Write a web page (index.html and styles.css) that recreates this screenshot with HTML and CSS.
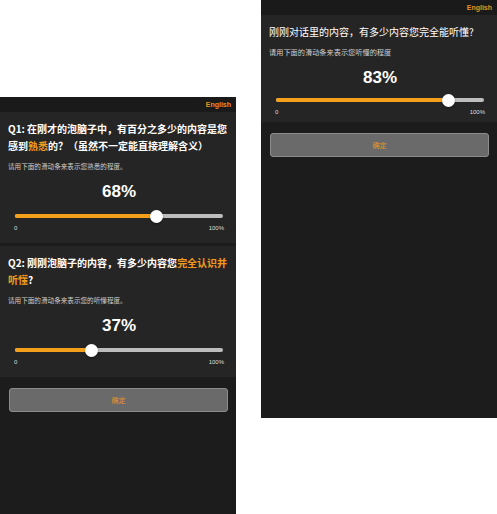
FILE: index.html
```html
<!DOCTYPE html>
<html lang="zh-CN">

<head>
    <meta charset="UTF-8">
    <meta name="viewport" content="width=device-width, initial-scale=1.0">
    <title>听懂程度问卷</title>
    <link rel="stylesheet" href="styles.css">
</head>

<body>

    <div class="stage">

        <!-- left screen: two questions -->
        <section class="phone phone-left">
            <header class="topbar"><span class="lang">English</span></header>

            <div class="card">
                <p class="question">Q1: 在刚才的泡脑子中，有百分之多少的内容是您<br>感到<span class="hl">熟悉</span>的？（虽然不一定能直接理解含义）</p>
                <p class="hint">请用下面的滑动条来表示您熟悉的程度。</p>
                <div class="pct">68%</div>
                <div class="slider">
                    <div class="fill" style="width: 68%"></div>
                    <span class="thumb" style="left: 68%"></span>
                </div>
                <div class="scale"><span>0</span><span>100%</span></div>
            </div>

            <div class="card">
                <p class="question">Q2: 刚刚泡脑子的内容，有多少内容您<span class="hl">完全认识并</span><br><span class="hl">听懂</span>?</p>
                <p class="hint">请用下面的滑动条来表示您的听懂程度。</p>
                <div class="pct">37%</div>
                <div class="slider">
                    <div class="fill" style="width: 37%"></div>
                    <span class="thumb" style="left: 37%"></span>
                </div>
                <div class="scale"><span>0</span><span>100%</span></div>
            </div>

            <div class="actions"><button class="confirm">确定</button></div>
        </section>

        <!-- right screen: single question -->
        <section class="phone phone-right">
            <header class="topbar"><span class="lang">English</span></header>

            <div class="card card-single">
                <p class="question question-light">刚刚对话里的内容，有多少内容您完全能听懂?</p>
                <p class="hint">请用下面的滑动条来表示您听懂的程度</p>
                <div class="pct">83%</div>
                <div class="slider">
                    <div class="fill" style="width: 83%"></div>
                    <span class="thumb" style="left: 83%"></span>
                </div>
                <div class="scale"><span>0</span><span>100%</span></div>
            </div>

            <div class="actions"><button class="confirm">确定</button></div>
        </section>

    </div>

</body>

</html>
```

FILE: styles.css
```css
body {
    margin: 0;
    padding: 0;
    background: #ffffff;
    font-family: 'Noto Sans CJK SC', 'Noto Sans', sans-serif;
    color: #ffffff;
    overflow: hidden;
}

.stage {
    display: flex;
    align-items: flex-start;
    gap: 25px;
}

.phone {
    width: 236px;
    height: 418px;
    background: #1c1c1c;
    display: flex;
    flex-direction: column;
    gap: 3px;
    flex-shrink: 0;
}

.phone-left {
    margin-top: 97px;
}

.topbar {
    height: 15px;
    background: #1a1a1a;
    display: flex;
    justify-content: flex-end;
    align-items: center;
    padding: 0 5px;
    margin-bottom: -3px; /* header sits flush on the first card */
}

.lang {
    font-family: 'Liberation Sans', sans-serif;
    font-size: 7px;
    font-weight: bold;
    color: #e8901c;
}

.card {
    background: #252525;
    padding: 8px 6px 11px 8px;
}

.question {
    margin: 0;
    font-size: 10px;
    line-height: 17px;
    font-weight: bold;
    color: #ffffff;
}

.question-light {
    font-weight: normal;
}

.hl {
    color: #f39a1c;
}

.hint {
    margin: 7px 0 0;
    font-size: 6.6px;
    line-height: 10px;
    color: #cfcfcf;
}

.card-single .hint {
    font-size: 7.2px;
}

.pct {
    margin-top: 11px;
    font-family: 'Liberation Sans', sans-serif;
    font-size: 17px;
    font-weight: bold;
    line-height: 20px;
    text-align: center;
}

.slider {
    position: relative;
    height: 4px;
    margin: 12px 7px 4px;
    background: #bdbdbd;
    border-radius: 2px;
}

.card-single .slider {
    margin-top: 10px;
}

.fill {
    height: 100%;
    background: #f5a01a;
    border-radius: 2px 0 0 2px;
}

.thumb {
    position: absolute;
    top: 50%;
    width: 13px;
    height: 13px;
    margin: -6.5px 0 0 -6.5px;
    background: #ffffff;
    border-radius: 50%;
    box-shadow: 0 1px 2px rgba(0, 0, 0, 0.4);
}

.scale {
    display: flex;
    justify-content: space-between;
    margin: 6px 6px 0 6px;
    font-family: 'Liberation Sans', sans-serif;
    font-size: 6px;
    line-height: 8px;
    color: #dddddd;
}

.card-single {
    padding-bottom: 6px;
}

.actions {
    padding: 8px 8px 0 9px;
}

.confirm {
    display: block;
    width: 100%;
    height: 24px;
    background: #6a6a6a;
    border: 1px solid #8c8c8c;
    border-radius: 3px;
    font-family: 'Noto Sans CJK SC', sans-serif;
    font-size: 7px;
    color: #e8962a;
    padding: 0;
}
```
